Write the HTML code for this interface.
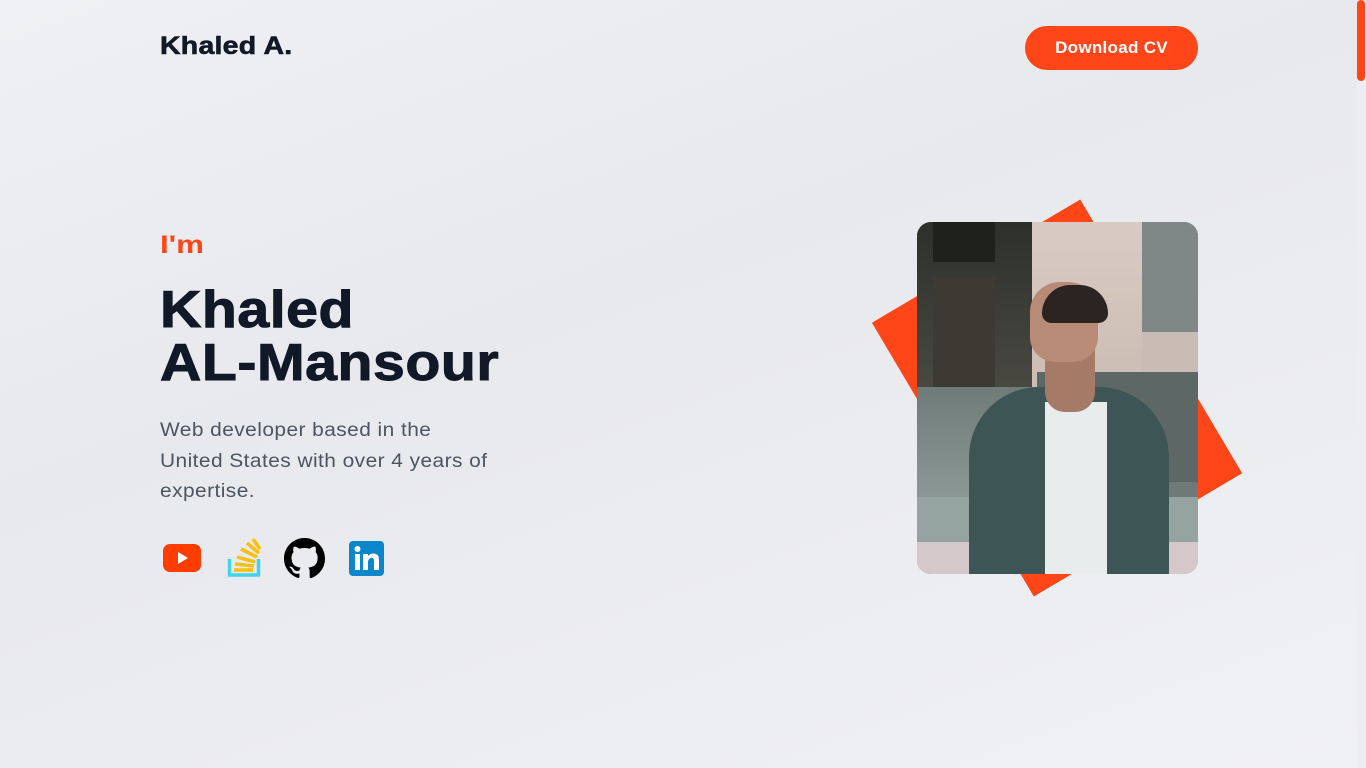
<!DOCTYPE html>
<html><head><meta charset="utf-8"><style>
*{margin:0;padding:0;box-sizing:border-box}
body{width:1366px;height:768px;overflow:hidden;background:linear-gradient(160deg,#eef0f3 0%,#e8e9ed 40%,#f0f1f4 100%);font-family:"Liberation Sans",sans-serif;position:relative;color:#111827}
.logo{position:absolute;left:160px;top:32px;font-size:25px;font-weight:700;letter-spacing:0.2px;color:#111827;transform:scaleX(1.14);transform-origin:left;-webkit-text-stroke:0.6px #111827}
.btn{position:absolute;left:1025px;top:26px;width:173px;height:44px;border-radius:22px;background:#ff4619;color:#fff;font-size:17px;font-weight:700;text-align:center;line-height:44px;letter-spacing:0.3px}
.im{position:absolute;left:160px;top:231px;font-size:25px;font-weight:700;color:#ff4619;transform:scaleX(1.25);transform-origin:left}
h1{position:absolute;left:160px;top:284px;font-size:52px;line-height:53px;font-weight:700;letter-spacing:0.5px;color:#111827;transform:scaleX(1.1);transform-origin:left;-webkit-text-stroke:1px #111827}
p{position:absolute;left:160px;top:416px;white-space:nowrap;font-size:19px;line-height:30.5px;color:#4b5563;letter-spacing:0.4px;transform:scaleX(1.1);transform-origin:left}
.icons{position:absolute;left:160px;top:538px}
.icons svg{position:absolute}
.sq{position:absolute;left:936px;top:239px;width:242px;height:318px;background:#ff4619;transform:rotate(-30.6deg)}
.photo{position:absolute;left:917px;top:222px;width:281px;height:352px;border-radius:14px;overflow:hidden;background:#6f7a78}
.photo div{position:absolute}
.sb{position:absolute;left:1357px;top:0;width:9px;height:768px;background:#eceef1}
.th{position:absolute;left:1357px;top:0;width:8px;height:81px;border-radius:4px;background:#ff4619}
</style></head><body>
<div class="logo">Khaled A.</div>
<div class="btn">Download CV</div>
<div class="im">I'm</div>
<h1>Khaled<br>AL-Mansour</h1>
<p>Web developer based in the<br>United States with over 4 years of<br>expertise.</p>
<div class="icons">
<svg style="left:3px;top:6px" width="38" height="28" viewBox="0 0 38 28"><rect width="38" height="28" rx="7" fill="#ff3d00"/><path d="M15 8v12l10-6z" fill="#fff"/></svg>
<svg style="left:66px;top:0" width="36" height="40" viewBox="0 0 36 40"><path d="M3.5 21v16h29V21" fill="none" stroke="#3fd5ea" stroke-width="3.5"/><g stroke="#fbbf0e" stroke-width="3.5"><path d="M8 32h19"/><path d="M9 26l19 2"/><path d="M11 19l18 5"/><path d="M15 11l16 8"/><path d="M21 5l12 10"/><path d="M27 1l7 10"/></g></svg>
<svg style="left:124px;top:0" width="41" height="41" viewBox="0 0 16 16"><path fill="#000" d="M8 0C3.58 0 0 3.58 0 8c0 3.54 2.290 6.53 5.47 7.59.4.07.55-.17.55-.38v-1.33c-2.23.48-2.7-1.07-2.7-1.07-.36-.92-.89-1.17-.89-1.170-.73-.5.06-.49.06-.49.8.06 1.230.83 1.23.83.72 1.23 1.88.87 2.34.67.07-.52.28-.87.51-1.07-1.78-.2-3.64-.89-3.640-3.95 0-.87.31-1.59.82-2.15-.08-.2-.36-1.02.08-2.12 0 0 .67-.21 2.2.82.64-.18 1.32-.27 2-.27.68 0 1.36.09 2 .27 1.53-1.04 2.2-.82 2.2-.82.44 1.1.16 1.92.08 2.12.51.56.82 1.27.82 2.15 0 3.07-1.87 3.75-3.65 3.95.29.25.54.73.54 1.48v2.2c0 .21.15.46.55.38A8.01 8.01 0 0016 8c0-4.42-3.58-8-8-8z"/></svg>
<svg style="left:189px;top:3px" width="35" height="35" viewBox="0 0 35 35"><rect width="35" height="35" rx="4" fill="#0b86ca"/><rect x="6" y="13" width="5" height="16" fill="#fff"/><circle cx="8.5" cy="8" r="3" fill="#fff"/><path d="M14 13h5v2.5c1-2 3-3 5.5-3 4 0 5.5 2.5 5.5 6.5v10h-5v-9c0-2-.7-3.3-2.5-3.3S19 19 19 21v8h-5z" fill="#fff"/></svg>
</div>
<div class="sq"></div>
<div class="photo">
<div style="left:0;top:0;width:120px;height:352px;background:linear-gradient(#2e302c,#4a4a42 50%,#6d7774 60%,#8a9895 100%)"></div>
<div style="left:16px;top:0;width:62px;height:40px;background:#1f211d"></div>
<div style="left:16px;top:55px;width:62px;height:110px;background:#3c3a33"></div>
<div style="left:115px;top:0;width:110px;height:175px;background:linear-gradient(#d9cbc3,#cbbcb3)"></div>
<div style="left:225px;top:0;width:56px;height:110px;background:#7f8886"></div>
<div style="left:225px;top:110px;width:56px;height:65px;background:#c9bcb5"></div>
<div style="left:120px;top:150px;width:161px;height:110px;background:#5d6866"></div>
<div style="left:0;top:165px;width:120px;height:110px;background:linear-gradient(#6f7b78,#8b9896)"></div>
<div style="left:0;top:275px;width:281px;height:45px;background:#95a3a1"></div>
<div style="left:0;top:320px;width:281px;height:32px;background:#d5c8cb"></div>
<div style="left:52px;top:165px;width:200px;height:200px;border-radius:70px 70px 0 0;background:#3d5555"></div>
<div style="left:128px;top:180px;width:62px;height:180px;background:#e8ecec"></div>
<div style="left:128px;top:100px;width:50px;height:90px;background:#a57a66;border-radius:20px"></div>
<div style="left:113px;top:60px;width:68px;height:80px;background:#b78b75;border-radius:30px 30px 25px 25px"></div>
<div style="left:125px;top:63px;width:66px;height:38px;background:#2b2421;border-radius:30px 30px 10px 10px"></div>
</div>
<div class="sb"></div><div class="th"></div>
</body></html>
